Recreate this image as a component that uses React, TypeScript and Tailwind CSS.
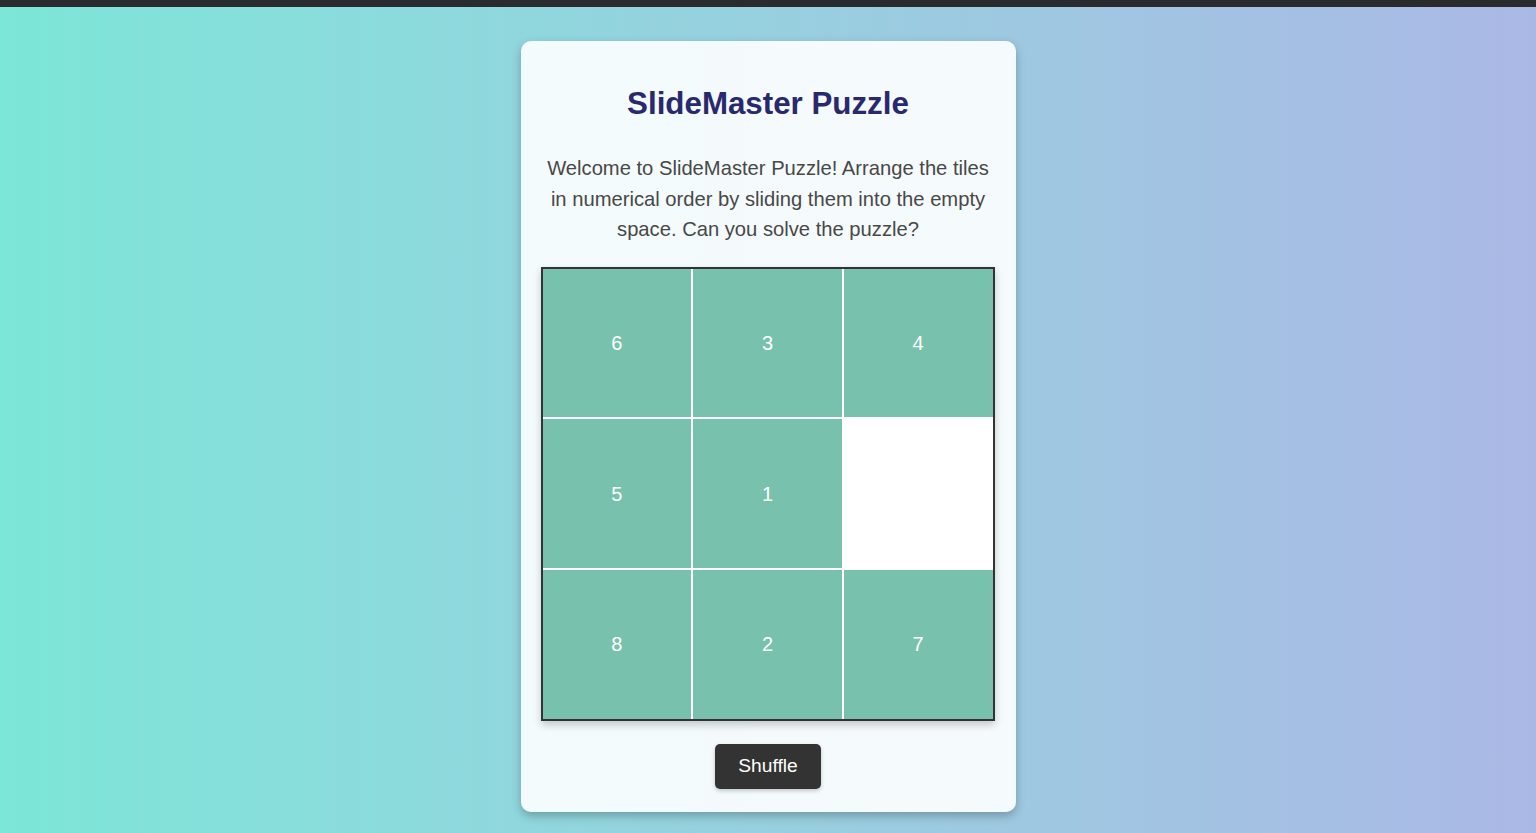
import React, { useState } from "react";

const START = [6, 3, 4, 5, 1, 0, 8, 2, 7];

function Tile({ value }: { value: number }) {
  if (value === 0) return <div className="bg-white" />;
  return (
    <div className="bg-[#78c2ad] flex items-center justify-center text-white text-[20px] cursor-pointer select-none">
      {value}
    </div>
  );
}

export default function App() {
  const [tiles, setTiles] = useState<number[]>(START);

  const shuffle = () => {
    const next = [...tiles];
    for (let i = next.length - 1; i > 0; i--) {
      const j = Math.floor(Math.random() * (i + 1));
      [next[i], next[j]] = [next[j], next[i]];
    }
    setTiles(next);
  };

  return (
    <div className="h-[833px] flex flex-col font-['Liberation_Sans',Arial,sans-serif]">
      {/* window chrome strip */}
      <div className="h-[7px] bg-[#292b2e] shrink-0" />

      <div className="flex-1 bg-gradient-to-r from-[#7ce6d8] to-[#aab8e5] flex justify-center">
        <div className="mt-[34px] w-[495px] h-[771px] bg-white/90 rounded-[10px] shadow-[0_4px_10px_rgba(0,0,0,0.25)] px-5 pt-5 pb-[23px] flex flex-col">
          <h1 className="mt-[24px] text-[31.3px] leading-[37px] font-bold text-center text-[#29296e]">
            SlideMaster Puzzle
          </h1>

          <p className="mt-[31px] text-[20.2px] leading-[30.6px] text-center text-[#484848]">
            Welcome to SlideMaster Puzzle! Arrange the tiles in numerical order by sliding them into the
            empty space. Can you solve the puzzle?
          </p>

          <div className="mt-[22px] w-[454px] h-[454px] border-2 border-[#333] bg-white grid grid-cols-3 grid-rows-3 gap-[2px] shadow-[0_4px_8px_rgba(0,0,0,0.2)]">
            {tiles.map((t, i) => (
              <Tile key={i} value={t} />
            ))}
          </div>

          <div className="mt-[23px] flex justify-center">
            <button
              onClick={shuffle}
              className="w-[106px] h-[45px] bg-[#333] text-white text-[19.2px] rounded-[5px] shadow-[0_2px_4px_rgba(0,0,0,0.2)]"
            >
              Shuffle
            </button>
          </div>
        </div>
      </div>
    </div>
  );
}
